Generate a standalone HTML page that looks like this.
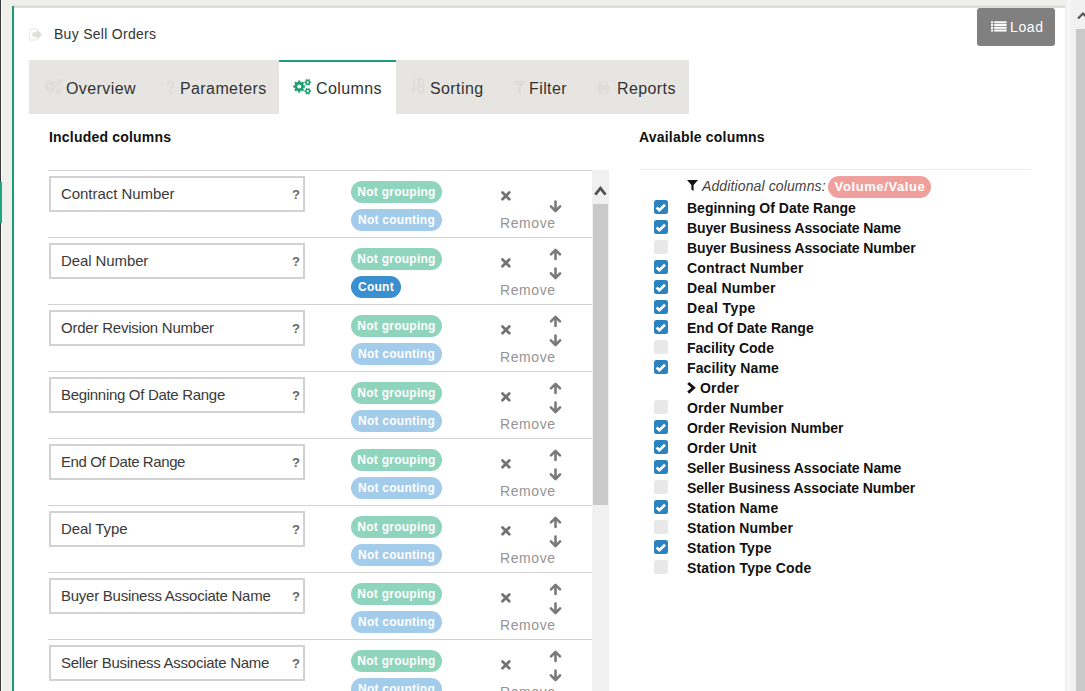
<!DOCTYPE html>
<html><head><meta charset="utf-8"><style>
*{box-sizing:border-box;margin:0;padding:0}
html,body{width:1085px;height:691px;overflow:hidden;background:#fff}
body{position:relative;font-family:"Liberation Sans",sans-serif;color:#222}
.a{position:absolute}
svg{display:block}
#topband{left:0;top:0;width:1085px;height:6px;background:#eeeeea}
#topline{left:0;top:5px;width:1085px;height:3px;background:linear-gradient(#e4e4e0 0,#e4e4e0 1px,#dcdcd9 1px)}
#leftdark{left:0;top:0;width:1px;height:691px;background:#3b3b3b}
#leftgreen{left:0;top:182px;width:2px;height:41px;background:#1fa57a}
#leftwhite{left:1px;top:0;width:1px;height:691px;background:#fff}
#leftstrip{left:2px;top:0;width:10px;height:691px;background:#efefec}
#greenline{left:12px;top:6px;width:2px;height:685px;background:#1f9e76}
#rightstrip{left:1065px;top:0;width:7px;height:691px;background:#f1f1f1}
#rightstrip2{left:1067px;top:0;width:4px;height:691px;background:#f6f6f6}
#pagetrack{left:1072px;top:0;width:13px;height:691px;background:#f1f1f1}
#pagethumb{left:1076px;top:29px;width:9px;height:662px;background:#c9c9c9}
#title{left:54px;top:25px;font-size:14px;line-height:18px;color:#333;white-space:nowrap;letter-spacing:0.28px}
#loadbtn{left:977px;top:8px;width:78px;height:38px;background:#808080;border-radius:3px;color:#fff}
#loadbtn .lt{position:absolute;left:33px;top:10px;font-size:14px;line-height:18px;white-space:nowrap;letter-spacing:0.6px}
#tabbar{left:29px;top:60px;width:660px;height:54px;background:#e6e5e2}
.tabt{position:absolute;top:0;height:54px;font-size:16px;line-height:58px;color:#333;white-space:nowrap;letter-spacing:0.4px}
.tabi{position:absolute;top:18px}
.tabact{position:absolute;top:0;left:250px;width:117px;height:54px;background:#fff;border-top:2px solid #1f9e76}
.hd{font-size:14px;font-weight:bold;color:#111;white-space:nowrap;line-height:18px;letter-spacing:0.2px}
.sep{position:absolute;left:48px;width:544px;height:1px;background:#d2d2d2}
.sep2{position:absolute;left:640px;width:391px;height:1px;background:#ececec}
.box{position:absolute;left:49px;width:256px;height:36px;border:2px solid #d2d2d2;background:#fff;white-space:nowrap}
.box .bt{position:absolute;left:10px;top:7px;font-size:15px;line-height:18px;color:#3a3a3a}
.box .q{position:absolute;left:241px;top:9px;font-weight:bold;font-size:13px;line-height:15px;color:#666}
.badge{position:absolute;left:351px;height:22px;border-radius:11px;color:#fff;font-weight:bold;font-size:12px;line-height:22px;text-align:center;white-space:nowrap;letter-spacing:0.25px}
.bg{width:91px;background:#8fd4bc}
.bc{width:91px;background:#a3cbea}
.bcount{width:50px;background:#3a8fd0}
.vv{width:103px;background:#f0a09c;font-size:13px;letter-spacing:0.6px;text-indent:1px}
.xic{position:absolute;left:501px}
.arr{position:absolute;left:549px}
.rm{position:absolute;left:500px;font-size:14px;color:#949494;white-space:nowrap;line-height:18px;letter-spacing:0.6px}
.chk{position:absolute;left:654px;width:14px;height:14px;border-radius:2.5px}
.chk.on{background:#2a82c0}
.chk.off{background:#e8e8e8}
.li{position:absolute;left:687px;font-size:14px;font-weight:bold;color:#111;white-space:nowrap;line-height:18px}
.addl{font-size:14px;font-style:italic;color:#444;white-space:nowrap;line-height:18px;letter-spacing:0.12px}

</style></head><body>
<div id="topband" class="a"></div>
<div id="topline" class="a"></div>
<div id="leftstrip" class="a"></div>
<div id="leftwhite" class="a"></div>
<div id="leftdark" class="a"></div>
<div id="leftgreen" class="a"></div>
<div id="greenline" class="a"></div>
<div id="rightstrip" class="a"></div>
<div id="rightstrip2" class="a"></div>
<div id="pagetrack" class="a"></div>
<div id="pagethumb" class="a"></div>
<div class="a" style="left:1077px;top:11px"><svg width="10" height="9" viewBox="0 0 10 9"><path d="M1 7.5L6 2.5L11 7.5" stroke="#555" stroke-width="2.2" fill="none"/></svg></div>
<div class="a" style="left:28px;top:28px"><svg width="16" height="13" viewBox="0 0 16 13"><rect x="1.5" y="1" width="8" height="11" rx="1.5" stroke="#ecece9" stroke-width="1.3" fill="none"/><path d="M4.5 4.2H9V1.5L14.5 6.5L9 11.5V8.8H4.5Z" fill="#dfdfd6"/></svg></div>
<div id="title" class="a">Buy Sell Orders</div>
<div id="loadbtn" class="a"><div class="a" style="left:14px;top:13px"><svg width="16" height="11" viewBox="0 0 16 11"><rect x="0" y="0.30" width="2.2" height="2" fill="#fff"/><rect x="3.2" y="0.30" width="12.4" height="2" fill="#fff"/><rect x="0" y="3.05" width="2.2" height="2" fill="#fff"/><rect x="3.2" y="3.05" width="12.4" height="2" fill="#fff"/><rect x="0" y="5.80" width="2.2" height="2" fill="#fff"/><rect x="3.2" y="5.80" width="12.4" height="2" fill="#fff"/><rect x="0" y="8.55" width="2.2" height="2" fill="#fff"/><rect x="3.2" y="8.55" width="12.4" height="2" fill="#fff"/></svg></div><span class="lt">Load</span></div>
<div id="tabbar" class="a">
<div class="tabact"></div>
<div class="tabi" style="left:15px"><svg width="19" height="17" viewBox="0 0 19 17"><path d="M10.63 7.27L12.11 7.45L12.11 9.55L10.63 9.73L10.20 10.76L11.12 11.93L9.63 13.42L8.46 12.50L7.43 12.93L7.25 14.41L5.15 14.41L4.97 12.93L3.94 12.50L2.77 13.42L1.28 11.93L2.20 10.76L1.77 9.73L0.29 9.55L0.29 7.45L1.77 7.27L2.20 6.24L1.28 5.07L2.77 3.58L3.94 4.50L4.97 4.07L5.15 2.59L7.25 2.59L7.43 4.07L8.46 4.50L9.63 3.58L11.12 5.07L10.20 6.24ZM8.20 8.50A2.0 2.0 0 1 0 4.20 8.50A2.0 2.0 0 1 0 8.20 8.50ZM17.04 3.42L18.01 3.51L18.01 5.09L17.04 5.18L16.63 5.88L17.04 6.77L15.67 7.56L15.10 6.77L14.30 6.77L13.73 7.56L12.36 6.77L12.77 5.88L12.36 5.18L11.39 5.09L11.39 3.51L12.36 3.42L12.77 2.72L12.36 1.83L13.73 1.04L14.30 1.83L15.10 1.83L15.67 1.04L17.04 1.83L16.63 2.72ZM15.80 4.30A1.1 1.1 0 1 0 13.60 4.30A1.1 1.1 0 1 0 15.80 4.30ZM17.04 12.32L18.01 12.41L18.01 13.99L17.04 14.08L16.63 14.78L17.04 15.67L15.67 16.46L15.10 15.67L14.30 15.67L13.73 16.46L12.36 15.67L12.77 14.78L12.36 14.08L11.39 13.99L11.39 12.41L12.36 12.32L12.77 11.62L12.36 10.73L13.73 9.94L14.30 10.73L15.10 10.73L15.67 9.94L17.04 10.73L16.63 11.62ZM15.80 13.20A1.1 1.1 0 1 0 13.60 13.20A1.1 1.1 0 1 0 15.80 13.20Z" fill="#dedddA" fill-rule="evenodd"/></svg></div><div class="tabt" style="left:37px">Overview</div>
<div class="tabi" style="left:137px"><svg width="9" height="13" viewBox="0 0 9 13" style="margin-top:3px"><path d="M1.5 4C1.5 2 3 1 4.5 1S7.5 2 7.5 4C7.5 6 4.8 6.2 4.8 8.5" stroke="#dedddA" stroke-width="2.2" fill="none"/><rect x="3.6" y="10.2" width="2.4" height="2.4" fill="#dedddA"/></svg></div><div class="tabt" style="left:151px">Parameters</div>
<div class="tabi" style="left:264px"><svg width="19" height="17" viewBox="0 0 19 17"><path d="M10.63 7.27L12.11 7.45L12.11 9.55L10.63 9.73L10.20 10.76L11.12 11.93L9.63 13.42L8.46 12.50L7.43 12.93L7.25 14.41L5.15 14.41L4.97 12.93L3.94 12.50L2.77 13.42L1.28 11.93L2.20 10.76L1.77 9.73L0.29 9.55L0.29 7.45L1.77 7.27L2.20 6.24L1.28 5.07L2.77 3.58L3.94 4.50L4.97 4.07L5.15 2.59L7.25 2.59L7.43 4.07L8.46 4.50L9.63 3.58L11.12 5.07L10.20 6.24ZM8.20 8.50A2.0 2.0 0 1 0 4.20 8.50A2.0 2.0 0 1 0 8.20 8.50ZM17.04 3.42L18.01 3.51L18.01 5.09L17.04 5.18L16.63 5.88L17.04 6.77L15.67 7.56L15.10 6.77L14.30 6.77L13.73 7.56L12.36 6.77L12.77 5.88L12.36 5.18L11.39 5.09L11.39 3.51L12.36 3.42L12.77 2.72L12.36 1.83L13.73 1.04L14.30 1.83L15.10 1.83L15.67 1.04L17.04 1.83L16.63 2.72ZM15.80 4.30A1.1 1.1 0 1 0 13.60 4.30A1.1 1.1 0 1 0 15.80 4.30ZM17.04 12.32L18.01 12.41L18.01 13.99L17.04 14.08L16.63 14.78L17.04 15.67L15.67 16.46L15.10 15.67L14.30 15.67L13.73 16.46L12.36 15.67L12.77 14.78L12.36 14.08L11.39 13.99L11.39 12.41L12.36 12.32L12.77 11.62L12.36 10.73L13.73 9.94L14.30 10.73L15.10 10.73L15.67 9.94L17.04 10.73L16.63 11.62ZM15.80 13.20A1.1 1.1 0 1 0 13.60 13.20A1.1 1.1 0 1 0 15.80 13.20Z" fill="#1f9e70" fill-rule="evenodd"/></svg></div><div class="tabt" style="left:287px">Columns</div>
<div class="tabi" style="left:382px"><svg width="14" height="15" viewBox="0 0 14 15"><path d="M3 1V13M0.5 10.5L3 13.5L5.5 10.5" stroke="#dedddA" stroke-width="2" fill="none"/><rect x="7.5" y="1" width="5" height="5.5" fill="none" stroke="#dedddA" stroke-width="1.6"/><rect x="7.5" y="8.5" width="5" height="5.5" fill="none" stroke="#dedddA" stroke-width="1.6"/></svg></div><div class="tabt" style="left:401px">Sorting</div>
<div class="tabi" style="left:484px"><svg width="13" height="15" viewBox="0 0 13 15" style="margin-top:2px"><path d="M0 1H13L7.8 7V14L5.2 12.5V7Z" fill="#dedddA"/></svg></div><div class="tabt" style="left:500px">Filter</div>
<div class="tabi" style="left:568px"><svg width="13" height="13" viewBox="0 0 13 13" style="margin-top:3px"><rect x="3" y="0.5" width="7" height="4" fill="none" stroke="#dedddA" stroke-width="1.5"/><rect x="0.5" y="4.5" width="12" height="5" rx="1" fill="#dedddA"/><rect x="3" y="8" width="7" height="4.5" fill="none" stroke="#dedddA" stroke-width="1.5"/></svg></div><div class="tabt" style="left:588px">Reports</div>
</div>
<div class="a hd" style="left:49px;top:128px">Included columns</div>
<div class="a hd" style="left:639px;top:128px">Available columns</div>
<div class="sep" style="top:170px"></div>
<div class="box" style="top:176px"><span class="bt" style="letter-spacing:-0.050px">Contract Number</span><span class="q">?</span></div>
<div class="badge bg" style="top:181px">Not grouping</div>
<div class="badge bc" style="top:209px">Not counting</div>
<div class="xic" style="top:191px"><svg width="11" height="11" viewBox="0 0 11 11"><path d="M1.5 1.5L8.3 8.3M8.3 1.5L1.5 8.3" stroke="#727272" stroke-width="2.7" stroke-linecap="round"/></svg></div>
<div class="arr" style="top:200px"><svg width="13" height="13" viewBox="0 0 13 13"><path d="M6.5 1.5V10.6M1.9 6.4L6.5 11L11.1 6.4" stroke="#7a7a7a" stroke-width="2.6" fill="none" stroke-linecap="round" stroke-linejoin="round"/></svg></div>
<div class="rm" style="top:214px">Remove</div>
<div class="sep" style="top:237px"></div>
<div class="box" style="top:243px"><span class="bt" style="letter-spacing:-0.100px">Deal Number</span><span class="q">?</span></div>
<div class="badge bg" style="top:248px">Not grouping</div>
<div class="badge bcount" style="top:276px">Count</div>
<div class="xic" style="top:258px"><svg width="11" height="11" viewBox="0 0 11 11"><path d="M1.5 1.5L8.3 8.3M8.3 1.5L1.5 8.3" stroke="#727272" stroke-width="2.7" stroke-linecap="round"/></svg></div>
<div class="arr" style="top:248px"><svg width="13" height="13" viewBox="0 0 13 13"><path d="M6.5 11V2.2M2 6.4L6.5 1.9L11 6.4" stroke="#7a7a7a" stroke-width="2.6" fill="none" stroke-linecap="round" stroke-linejoin="round"/></svg></div>
<div class="arr" style="top:267px"><svg width="13" height="13" viewBox="0 0 13 13"><path d="M6.5 1.5V10.6M1.9 6.4L6.5 11L11.1 6.4" stroke="#7a7a7a" stroke-width="2.6" fill="none" stroke-linecap="round" stroke-linejoin="round"/></svg></div>
<div class="rm" style="top:281px">Remove</div>
<div class="sep" style="top:304px"></div>
<div class="box" style="top:310px"><span class="bt" style="letter-spacing:-0.225px">Order Revision Number</span><span class="q">?</span></div>
<div class="badge bg" style="top:315px">Not grouping</div>
<div class="badge bc" style="top:343px">Not counting</div>
<div class="xic" style="top:325px"><svg width="11" height="11" viewBox="0 0 11 11"><path d="M1.5 1.5L8.3 8.3M8.3 1.5L1.5 8.3" stroke="#727272" stroke-width="2.7" stroke-linecap="round"/></svg></div>
<div class="arr" style="top:315px"><svg width="13" height="13" viewBox="0 0 13 13"><path d="M6.5 11V2.2M2 6.4L6.5 1.9L11 6.4" stroke="#7a7a7a" stroke-width="2.6" fill="none" stroke-linecap="round" stroke-linejoin="round"/></svg></div>
<div class="arr" style="top:334px"><svg width="13" height="13" viewBox="0 0 13 13"><path d="M6.5 1.5V10.6M1.9 6.4L6.5 11L11.1 6.4" stroke="#7a7a7a" stroke-width="2.6" fill="none" stroke-linecap="round" stroke-linejoin="round"/></svg></div>
<div class="rm" style="top:348px">Remove</div>
<div class="sep" style="top:371px"></div>
<div class="box" style="top:377px"><span class="bt" style="letter-spacing:-0.305px">Beginning Of Date Range</span><span class="q">?</span></div>
<div class="badge bg" style="top:382px">Not grouping</div>
<div class="badge bc" style="top:410px">Not counting</div>
<div class="xic" style="top:392px"><svg width="11" height="11" viewBox="0 0 11 11"><path d="M1.5 1.5L8.3 8.3M8.3 1.5L1.5 8.3" stroke="#727272" stroke-width="2.7" stroke-linecap="round"/></svg></div>
<div class="arr" style="top:382px"><svg width="13" height="13" viewBox="0 0 13 13"><path d="M6.5 11V2.2M2 6.4L6.5 1.9L11 6.4" stroke="#7a7a7a" stroke-width="2.6" fill="none" stroke-linecap="round" stroke-linejoin="round"/></svg></div>
<div class="arr" style="top:401px"><svg width="13" height="13" viewBox="0 0 13 13"><path d="M6.5 1.5V10.6M1.9 6.4L6.5 11L11.1 6.4" stroke="#7a7a7a" stroke-width="2.6" fill="none" stroke-linecap="round" stroke-linejoin="round"/></svg></div>
<div class="rm" style="top:415px">Remove</div>
<div class="sep" style="top:438px"></div>
<div class="box" style="top:444px"><span class="bt" style="letter-spacing:-0.406px">End Of Date Range</span><span class="q">?</span></div>
<div class="badge bg" style="top:449px">Not grouping</div>
<div class="badge bc" style="top:477px">Not counting</div>
<div class="xic" style="top:459px"><svg width="11" height="11" viewBox="0 0 11 11"><path d="M1.5 1.5L8.3 8.3M8.3 1.5L1.5 8.3" stroke="#727272" stroke-width="2.7" stroke-linecap="round"/></svg></div>
<div class="arr" style="top:449px"><svg width="13" height="13" viewBox="0 0 13 13"><path d="M6.5 11V2.2M2 6.4L6.5 1.9L11 6.4" stroke="#7a7a7a" stroke-width="2.6" fill="none" stroke-linecap="round" stroke-linejoin="round"/></svg></div>
<div class="arr" style="top:468px"><svg width="13" height="13" viewBox="0 0 13 13"><path d="M6.5 1.5V10.6M1.9 6.4L6.5 11L11.1 6.4" stroke="#7a7a7a" stroke-width="2.6" fill="none" stroke-linecap="round" stroke-linejoin="round"/></svg></div>
<div class="rm" style="top:482px">Remove</div>
<div class="sep" style="top:505px"></div>
<div class="box" style="top:511px"><span class="bt" style="letter-spacing:-0.088px">Deal Type</span><span class="q">?</span></div>
<div class="badge bg" style="top:516px">Not grouping</div>
<div class="badge bc" style="top:544px">Not counting</div>
<div class="xic" style="top:526px"><svg width="11" height="11" viewBox="0 0 11 11"><path d="M1.5 1.5L8.3 8.3M8.3 1.5L1.5 8.3" stroke="#727272" stroke-width="2.7" stroke-linecap="round"/></svg></div>
<div class="arr" style="top:516px"><svg width="13" height="13" viewBox="0 0 13 13"><path d="M6.5 11V2.2M2 6.4L6.5 1.9L11 6.4" stroke="#7a7a7a" stroke-width="2.6" fill="none" stroke-linecap="round" stroke-linejoin="round"/></svg></div>
<div class="arr" style="top:535px"><svg width="13" height="13" viewBox="0 0 13 13"><path d="M6.5 1.5V10.6M1.9 6.4L6.5 11L11.1 6.4" stroke="#7a7a7a" stroke-width="2.6" fill="none" stroke-linecap="round" stroke-linejoin="round"/></svg></div>
<div class="rm" style="top:549px">Remove</div>
<div class="sep" style="top:572px"></div>
<div class="box" style="top:578px"><span class="bt" style="letter-spacing:-0.250px">Buyer Business Associate Name</span><span class="q">?</span></div>
<div class="badge bg" style="top:583px">Not grouping</div>
<div class="badge bc" style="top:611px">Not counting</div>
<div class="xic" style="top:593px"><svg width="11" height="11" viewBox="0 0 11 11"><path d="M1.5 1.5L8.3 8.3M8.3 1.5L1.5 8.3" stroke="#727272" stroke-width="2.7" stroke-linecap="round"/></svg></div>
<div class="arr" style="top:583px"><svg width="13" height="13" viewBox="0 0 13 13"><path d="M6.5 11V2.2M2 6.4L6.5 1.9L11 6.4" stroke="#7a7a7a" stroke-width="2.6" fill="none" stroke-linecap="round" stroke-linejoin="round"/></svg></div>
<div class="arr" style="top:602px"><svg width="13" height="13" viewBox="0 0 13 13"><path d="M6.5 1.5V10.6M1.9 6.4L6.5 11L11.1 6.4" stroke="#7a7a7a" stroke-width="2.6" fill="none" stroke-linecap="round" stroke-linejoin="round"/></svg></div>
<div class="rm" style="top:616px">Remove</div>
<div class="sep" style="top:639px"></div>
<div class="box" style="top:645px"><span class="bt" style="letter-spacing:-0.259px">Seller Business Associate Name</span><span class="q">?</span></div>
<div class="badge bg" style="top:650px">Not grouping</div>
<div class="badge bc" style="top:678px">Not counting</div>
<div class="xic" style="top:660px"><svg width="11" height="11" viewBox="0 0 11 11"><path d="M1.5 1.5L8.3 8.3M8.3 1.5L1.5 8.3" stroke="#727272" stroke-width="2.7" stroke-linecap="round"/></svg></div>
<div class="arr" style="top:650px"><svg width="13" height="13" viewBox="0 0 13 13"><path d="M6.5 11V2.2M2 6.4L6.5 1.9L11 6.4" stroke="#7a7a7a" stroke-width="2.6" fill="none" stroke-linecap="round" stroke-linejoin="round"/></svg></div>
<div class="arr" style="top:669px"><svg width="13" height="13" viewBox="0 0 13 13"><path d="M6.5 1.5V10.6M1.9 6.4L6.5 11L11.1 6.4" stroke="#7a7a7a" stroke-width="2.6" fill="none" stroke-linecap="round" stroke-linejoin="round"/></svg></div>
<div class="rm" style="top:683px">Remove</div>
<div class="a" style="left:592px;top:170px;width:17px;height:521px;background:#f0f0f0"></div>
<div class="a" style="left:593px;top:204px;width:15px;height:301px;background:#c9c9c9"></div>
<div class="a" style="left:594px;top:184px"><svg width="13" height="13" viewBox="0 0 13 13"><path d="M1.3 10.6L6.4 4.2L11.5 10.6" stroke="#505050" stroke-width="2.7" fill="none"/></svg></div>
<div class="sep2" style="top:169px"></div>
<div class="a" style="left:687px;top:180px"><svg width="11" height="11" viewBox="0 0 11 11"><path d="M0 0H11L6.6 5V11L4.4 9.5V5Z" fill="#111"/></svg></div>
<div class="a addl" style="left:702px;top:177px">Additional columns:</div>
<div class="badge vv" style="left:828px;top:176px">Volume/Value</div>
<div class="chk on" style="top:200px"><svg width="14" height="14" viewBox="0 0 14 14"><path d="M2.6 7.6L5.4 10.2L11 4.8" stroke="#fff" stroke-width="2.7" fill="none"/></svg></div>
<div class="li" style="top:199px;letter-spacing:0.005px;">Beginning Of Date Range</div>
<div class="chk on" style="top:220px"><svg width="14" height="14" viewBox="0 0 14 14"><path d="M2.6 7.6L5.4 10.2L11 4.8" stroke="#fff" stroke-width="2.7" fill="none"/></svg></div>
<div class="li" style="top:219px;letter-spacing:-0.118px;">Buyer Business Associate Name</div>
<div class="chk off" style="top:240px"></div>
<div class="li" style="top:239px;letter-spacing:-0.117px;">Buyer Business Associate Number</div>
<div class="chk on" style="top:260px"><svg width="14" height="14" viewBox="0 0 14 14"><path d="M2.6 7.6L5.4 10.2L11 4.8" stroke="#fff" stroke-width="2.7" fill="none"/></svg></div>
<div class="li" style="top:259px;letter-spacing:0.143px;">Contract Number</div>
<div class="chk on" style="top:280px"><svg width="14" height="14" viewBox="0 0 14 14"><path d="M2.6 7.6L5.4 10.2L11 4.8" stroke="#fff" stroke-width="2.7" fill="none"/></svg></div>
<div class="li" style="top:279px;letter-spacing:0.210px;">Deal Number</div>
<div class="chk on" style="top:300px"><svg width="14" height="14" viewBox="0 0 14 14"><path d="M2.6 7.6L5.4 10.2L11 4.8" stroke="#fff" stroke-width="2.7" fill="none"/></svg></div>
<div class="li" style="top:299px;letter-spacing:0.412px;">Deal Type</div>
<div class="chk on" style="top:320px"><svg width="14" height="14" viewBox="0 0 14 14"><path d="M2.6 7.6L5.4 10.2L11 4.8" stroke="#fff" stroke-width="2.7" fill="none"/></svg></div>
<div class="li" style="top:319px;letter-spacing:-0.006px;">End Of Date Range</div>
<div class="chk off" style="top:340px"></div>
<div class="li" style="top:339px;letter-spacing:-0.017px;">Facility Code</div>
<div class="chk on" style="top:360px"><svg width="14" height="14" viewBox="0 0 14 14"><path d="M2.6 7.6L5.4 10.2L11 4.8" stroke="#fff" stroke-width="2.7" fill="none"/></svg></div>
<div class="li" style="top:359px;letter-spacing:0.125px;">Facility Name</div>
<div class="a" style="left:686px;top:381px"><svg width="10" height="13" viewBox="0 0 10 13"><path d="M2.2 2L7.6 6.8L2.2 11.6" stroke="#111" stroke-width="2.9" fill="none"/></svg></div>
<div class="li" style="left:700px;top:379px;letter-spacing:0.200px;">Order</div>
<div class="chk off" style="top:400px"></div>
<div class="li" style="top:399px;letter-spacing:0.136px;">Order Number</div>
<div class="chk on" style="top:420px"><svg width="14" height="14" viewBox="0 0 14 14"><path d="M2.6 7.6L5.4 10.2L11 4.8" stroke="#fff" stroke-width="2.7" fill="none"/></svg></div>
<div class="li" style="top:419px;letter-spacing:-0.040px;">Order Revision Number</div>
<div class="chk on" style="top:440px"><svg width="14" height="14" viewBox="0 0 14 14"><path d="M2.6 7.6L5.4 10.2L11 4.8" stroke="#fff" stroke-width="2.7" fill="none"/></svg></div>
<div class="li" style="top:439px;letter-spacing:0.022px;">Order Unit</div>
<div class="chk on" style="top:460px"><svg width="14" height="14" viewBox="0 0 14 14"><path d="M2.6 7.6L5.4 10.2L11 4.8" stroke="#fff" stroke-width="2.7" fill="none"/></svg></div>
<div class="li" style="top:459px;letter-spacing:-0.052px;">Seller Business Associate Name</div>
<div class="chk off" style="top:480px"></div>
<div class="li" style="top:479px;letter-spacing:-0.074px;">Seller Business Associate Number</div>
<div class="chk on" style="top:500px"><svg width="14" height="14" viewBox="0 0 14 14"><path d="M2.6 7.6L5.4 10.2L11 4.8" stroke="#fff" stroke-width="2.7" fill="none"/></svg></div>
<div class="li" style="top:499px;letter-spacing:0.155px;">Station Name</div>
<div class="chk off" style="top:520px"></div>
<div class="li" style="top:519px;letter-spacing:0.123px;">Station Number</div>
<div class="chk on" style="top:540px"><svg width="14" height="14" viewBox="0 0 14 14"><path d="M2.6 7.6L5.4 10.2L11 4.8" stroke="#fff" stroke-width="2.7" fill="none"/></svg></div>
<div class="li" style="top:539px;letter-spacing:0.136px;">Station Type</div>
<div class="chk off" style="top:560px"></div>
<div class="li" style="top:559px;letter-spacing:0.144px;">Station Type Code</div>
</body></html>
